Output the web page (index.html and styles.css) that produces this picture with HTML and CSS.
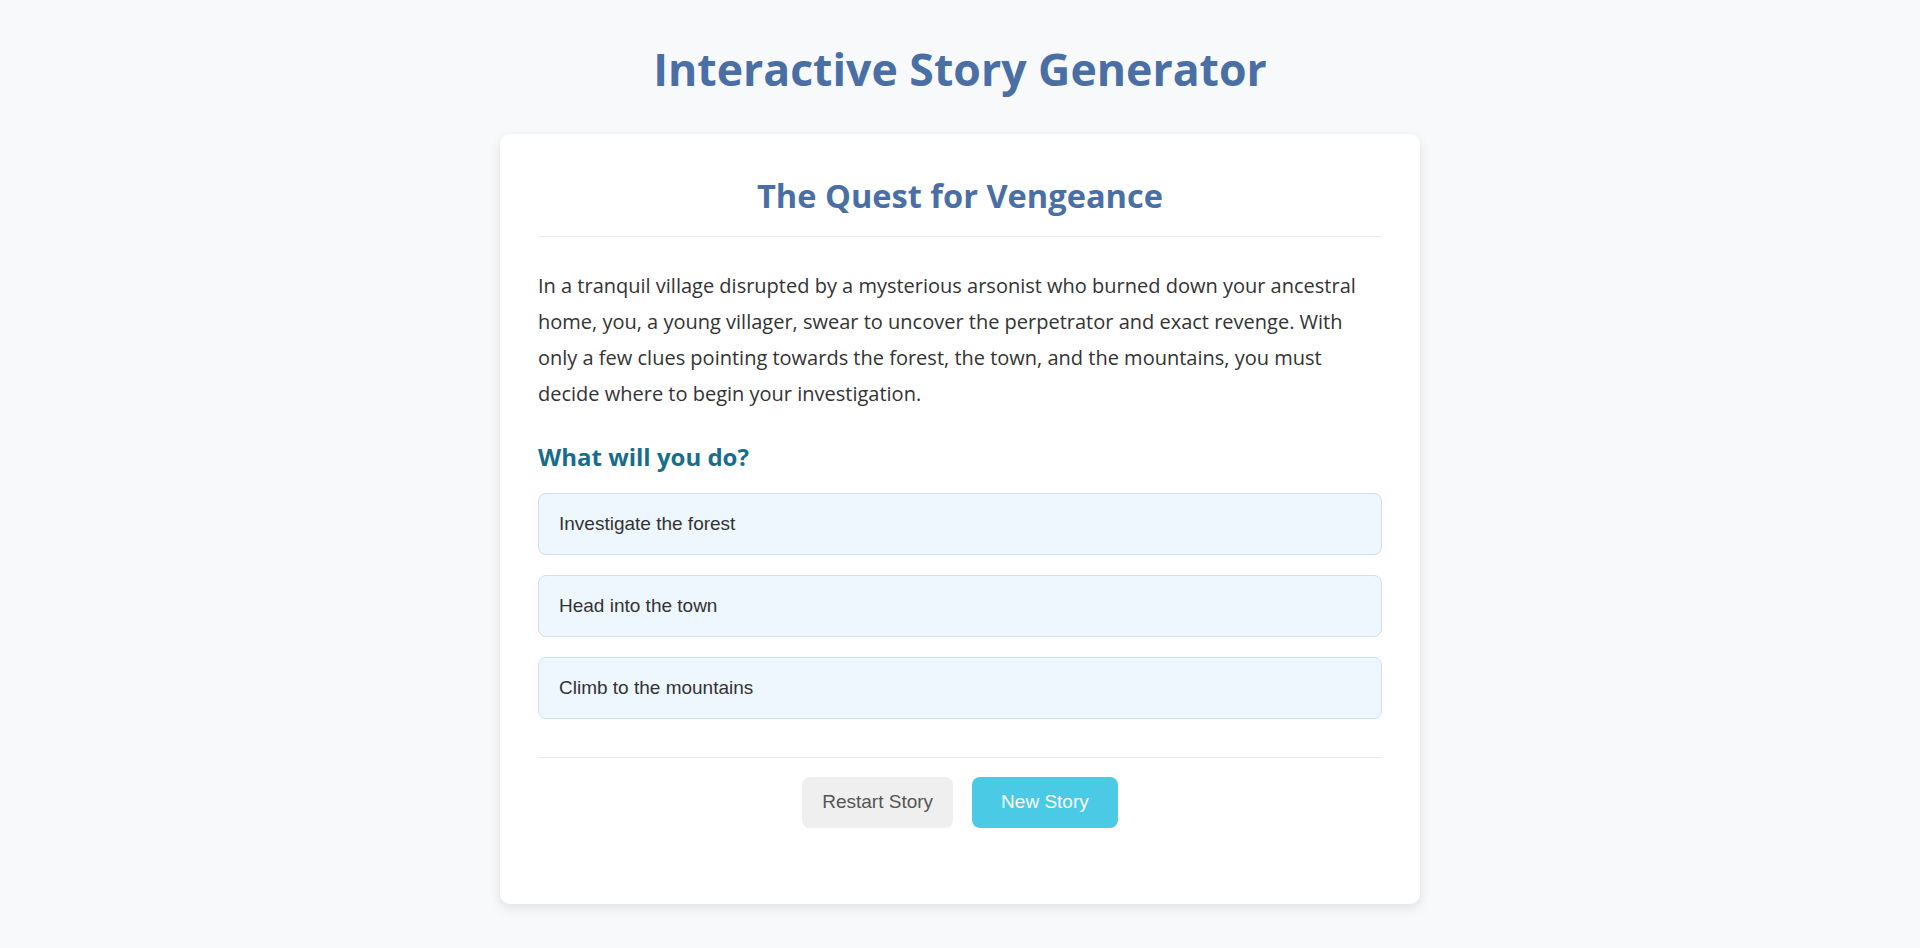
FILE: index.html
```html
<!DOCTYPE html>
<html lang="en">
<head>
<meta charset="utf-8">
<title>Interactive Story Generator</title>
<link rel="stylesheet" href="styles.css">
</head>
<body>
<div class="page">
  <h1 class="app-title">Interactive Story Generator</h1>
  <main class="card">
    <h2 class="story-title">The Quest for Vengeance</h2>
    <p class="story-text">In a tranquil village disrupted by a mysterious arsonist who burned down your ancestral home, you, a young villager, swear to uncover the perpetrator and exact revenge. With only a few clues pointing towards the forest, the town, and the mountains, you must decide where to begin your investigation.</p>
    <h3 class="prompt">What will you do?</h3>
    <div class="choices">
      <button class="choice">Investigate the forest</button>
      <button class="choice">Head into the town</button>
      <button class="choice">Climb to the mountains</button>
    </div>
    <div class="controls">
      <button class="btn btn-restart">Restart Story</button>
      <button class="btn btn-new">New Story</button>
    </div>
  </main>
</div>
</body>
</html>
```
FILE: styles.css
```css
* { box-sizing: border-box; }
html, body { margin: 0; padding: 0; }
body {
  background: #f7f9fb;
  font-family: "Open Sans", "Noto Sans", sans-serif;
  color: #333;
}
.page {
  display: flex;
  flex-direction: column;
  align-items: center;
  padding-top: 39px;
}
.app-title {
  margin: 0 0 35px;
  font-size: 44.6px;
  line-height: 60px;
  font-weight: 700;
  color: #4a6fa5;
  text-align: center;
}
.card {
  width: 920px;
  background: #fff;
  border-radius: 10px;
  box-shadow: 0 4px 12px rgba(0, 0, 0, 0.1);
  padding: 40px 38px 40px;
  margin-bottom: 44px;
}
.story-title {
  margin: 0;
  font-size: 32.6px;
  line-height: 44px;
  font-weight: 700;
  color: #4a6fa5;
  text-align: center;
  padding-bottom: 18px;
  border-bottom: 1px solid #eaeaea;
}
.story-text {
  margin: 30.5px 0 0;
  font-size: 20px;
  line-height: 36px;
  color: #333;
}
.prompt {
  margin: 30.5px 0 0;
  font-size: 24px;
  line-height: 30px;
  font-weight: 700;
  color: #176d8b;
}
.choices {
  display: flex;
  flex-direction: column;
  gap: 20px;
  margin-top: 20.5px;
}
.choice {
  display: block;
  width: 100%;
  text-align: left;
  font-family: "Liberation Sans", Arial, sans-serif;
  font-size: 19px;
  line-height: 22px;
  color: #333;
  background: #eef6fe;
  border: 1px solid #cfe0f5;
  border-radius: 8px;
  padding: 19px 20px;
  cursor: pointer;
}
.controls {
  display: flex;
  justify-content: center;
  gap: 19px;
  margin-top: 38px;
  padding-top: 19px;
  padding-bottom: 36px;
  border-top: 1px solid #eaeaea;
}
.btn {
  font-family: "Liberation Sans", Arial, sans-serif;
  font-size: 19px;
  line-height: 22px;
  border: none;
  border-radius: 8px;
  padding: 14.5px 20px;
  cursor: pointer;
}
.btn-restart {
  background: #efefef;
  color: #555;
}
.btn-new {
  background: #4acae4;
  color: #fff;
  padding-left: 29px;
  padding-right: 29px;
}
```
